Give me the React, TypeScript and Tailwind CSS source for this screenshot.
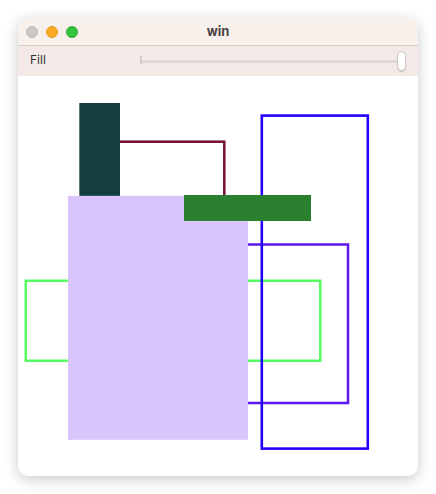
import React from 'react';

const TrafficLights = () => (
  <div className="flex items-center gap-2 absolute left-[8px] top-0 h-full">
    <span className="w-3 h-3 rounded-full bg-[#ccc6c4] border border-[#bdb6b3]" />
    <span className="w-3 h-3 rounded-full bg-[#f8aa24] border border-[#e19a1c]" />
    <span className="w-3 h-3 rounded-full bg-[#35c23c] border border-[#2cab32]" />
  </div>
);

const Slider = () => (
  <div className="relative flex-1 h-[22px] flex items-center">
    <div className="w-full h-[3px] bg-[#e1d9d5] rounded-full" />
    <div className="absolute left-0 top-[6px] w-[2px] h-[8px] bg-[#d3cbc7]" />
    <div className="absolute right-[-3px] top-[1px] w-[9px] h-[20px] rounded-full bg-white border border-[#cfc7c3] shadow-[0_1px_1px_rgba(0,0,0,0.15)]" />
  </div>
);

const Canvas = () => (
  <svg width="400" height="400" viewBox="0 0 400 400" className="block">
    <rect x="7.75" y="204.75" width="294.5" height="80" fill="none" stroke="#57fb64" strokeWidth="2.5" />
    <rect x="132" y="168.5" width="198" height="158.5" fill="none" stroke="#5a17ee" strokeWidth="2.5" />
    <rect x="243.8" y="39.6" width="106" height="333" fill="none" stroke="#2200ff" strokeWidth="2.6" />
    <rect x="82" y="65.7" width="124.3" height="68" fill="none" stroke="#740c36" strokeWidth="2.5" />
    <rect x="61.3" y="27" width="40.7" height="100" fill="#143e40" />
    <rect x="50" y="119.8" width="180" height="244" fill="#d9c4fc" />
    <rect x="166" y="119" width="127" height="26" fill="#2a802e" />
  </svg>
);

export default function App() {
  return (
    <div className="w-[436px] h-[494px] bg-white pt-[18px] pl-[18px] font-['Inter','Liberation_Sans',sans-serif]">
      <div className="w-[400px] h-[458px] rounded-[10px] overflow-hidden bg-white shadow-[0_3px_14px_rgba(0,0,0,0.22)] flex flex-col">
        <div className="relative h-[28px] bg-[#f8f0eb] border-b border-[#d8cfca] flex items-center justify-center shrink-0">
          <TrafficLights />
          <span className="text-[13px] font-bold text-[#4a4242]">win</span>
        </div>
        <div className="h-[30px] bg-[#f3eae7] flex items-center pl-[12px] pr-[15px] shrink-0">
          <span className="w-[110px] text-[12px] text-[#333] -mt-[3px]">Fill</span>
          <Slider />
        </div>
        <Canvas />
      </div>
    </div>
  );
}
